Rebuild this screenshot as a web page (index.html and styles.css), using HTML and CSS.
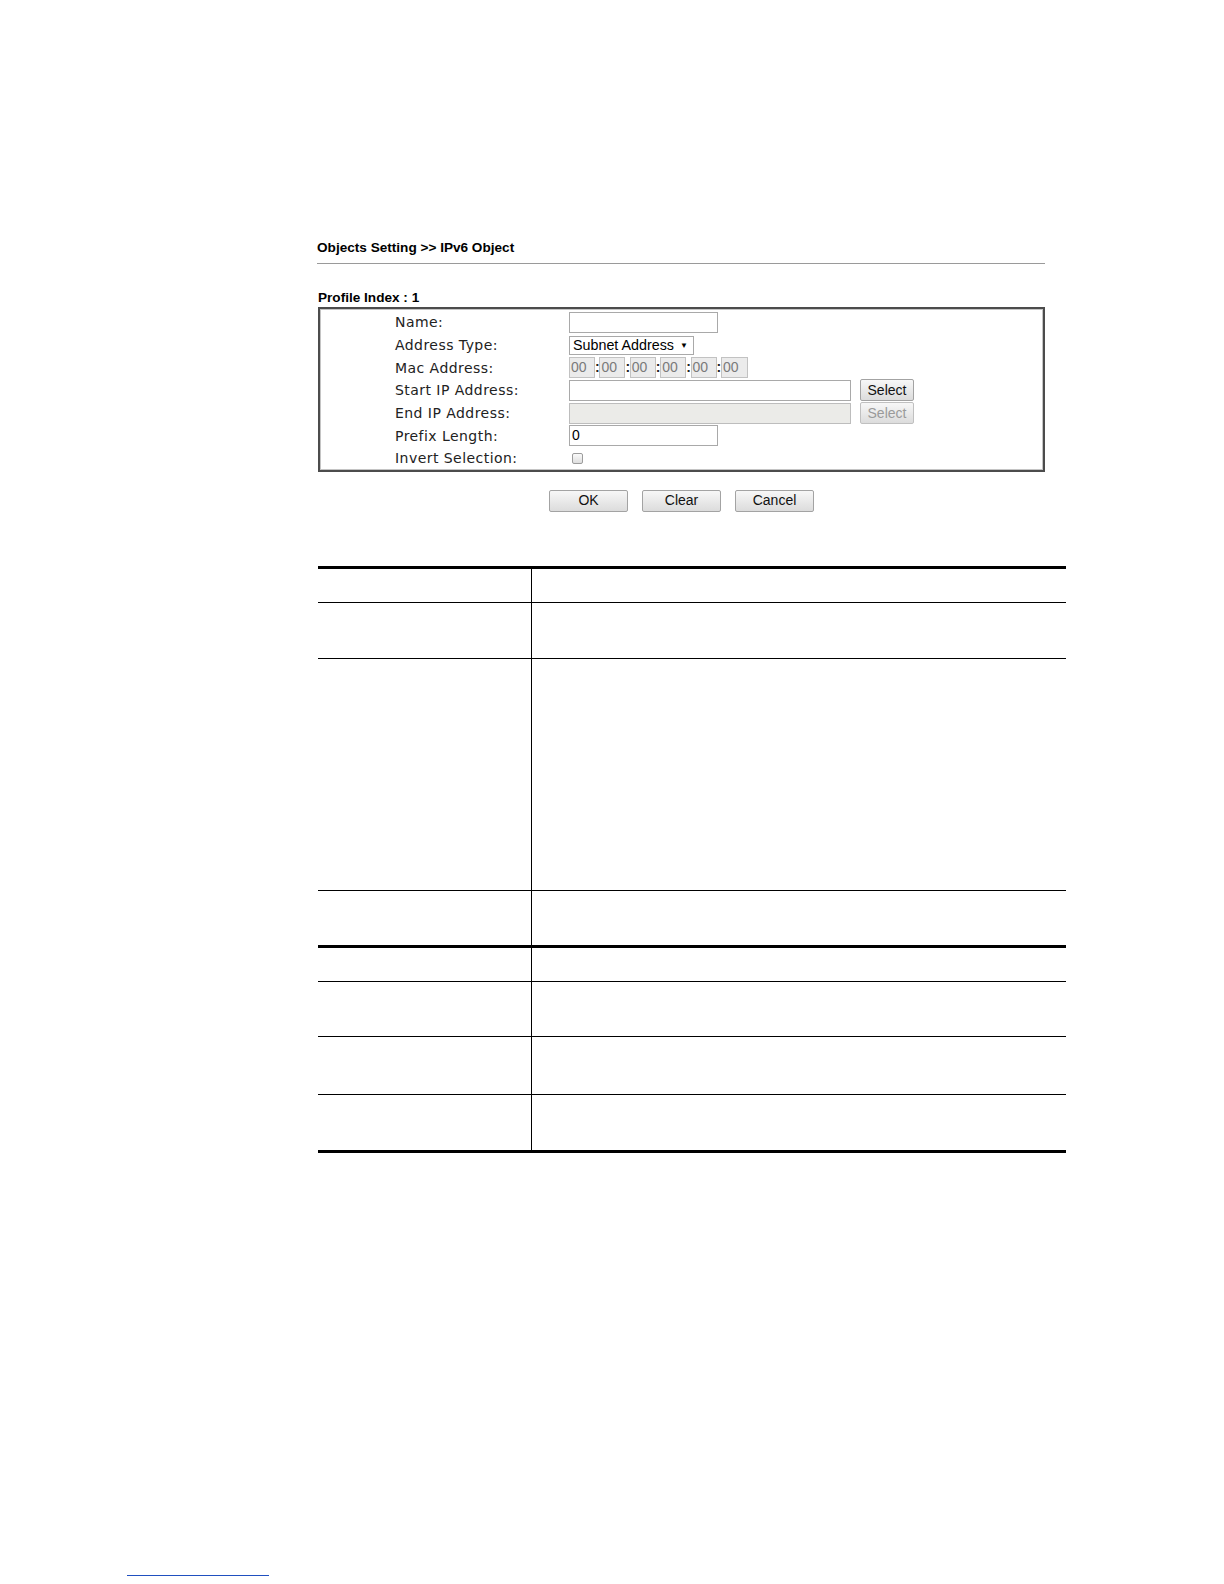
FILE: index.html
```html
<!DOCTYPE html>
<html lang="en">
<head>
<meta charset="utf-8">
<title>Objects Setting &gt;&gt; IPv6 Object</title>
<link rel="stylesheet" href="styles.css">
</head>
<body>
<div class="page">
  <div class="doc">
    <div class="title">Objects Setting &gt;&gt; IPv6 Object</div>
    <div class="profile">Profile Index : 1</div>
    <div class="box">
      <div class="row">
        <span class="label">Name:</span>
        <span class="input short"></span>
      </div>
      <div class="row">
        <span class="label">Address Type:</span>
        <span class="select">Subnet Address<span class="arrow">&#9660;</span></span>
      </div>
      <div class="row">
        <span class="label">Mac Address:</span>
        <span class="mac">
          <span class="mac-field">00</span><span class="colon">:</span><span class="mac-field">00</span><span class="colon">:</span><span class="mac-field">00</span><span class="colon">:</span><span class="mac-field">00</span><span class="colon">:</span><span class="mac-field">00</span><span class="colon">:</span><span class="mac-field">00</span>
        </span>
      </div>
      <div class="row">
        <span class="label">Start IP Address:</span>
        <span class="input long"></span>
        <span class="btn small">Select</span>
      </div>
      <div class="row">
        <span class="label">End IP Address:</span>
        <span class="input long disabled"></span>
        <span class="btn small disabled">Select</span>
      </div>
      <div class="row">
        <span class="label">Prefix Length:</span>
        <span class="input short">0</span>
      </div>
      <div class="row">
        <span class="label">Invert Selection:</span>
        <span class="checkbox"></span>
      </div>
    </div>
    <div class="actions">
      <span class="btn wide">OK</span>
      <span class="btn wide">Clear</span>
      <span class="btn wide">Cancel</span>
    </div>
  </div>

  <div class="tbl">
    <div class="tr h1"><div class="td"></div><div class="td"></div></div>
    <div class="tr h2"><div class="td"></div><div class="td"></div></div>
    <div class="tr h3"><div class="td"></div><div class="td"></div></div>
    <div class="tr h4"><div class="td"></div><div class="td"></div></div>
    <div class="tr h5 thick"><div class="td"></div><div class="td"></div></div>
    <div class="tr h6"><div class="td"></div><div class="td"></div></div>
    <div class="tr h7"><div class="td"></div><div class="td"></div></div>
    <div class="tr h8"><div class="td"></div><div class="td"></div></div>
  </div>

  <div class="footer-rule"></div>
</div>
</body>
</html>
```

FILE: styles.css
```css
html, body {
  margin: 0;
  padding: 0;
  background: #ffffff;
}

.page {
  padding-top: 240px;
}

.doc {
  margin-left: 317px;
  width: 728px;
}

.title {
  font: bold 13.6px/16px "Liberation Sans", Arial, sans-serif;
  color: #000;
  padding-bottom: 7px;
  border-bottom: 1px solid #9a9a9a;
}

.profile {
  margin-top: 26px;
  margin-left: 1px;
  font: bold 13.6px/16px "Liberation Sans", Arial, sans-serif;
  color: #000;
}

.box {
  margin-top: 1px;
  margin-left: 1px;
  width: 727px;
  box-sizing: border-box;
  border: 2px solid #4c4c4c;
  box-shadow: inset 0 0 0 1px #c4c4c4;
  padding: 2px 0 0 75px;
}

.row {
  display: flex;
  align-items: center;
  height: 22.7px;
}

.label {
  width: 174px;
  flex: none;
  font: 14px/16px "DejaVu Sans", Verdana, sans-serif;
  letter-spacing: 0.45px;
  color: #222;
}

.input {
  box-sizing: border-box;
  height: 21px;
  border: 1px solid #a9a9a9;
  background: #fff;
  font: 14px/19px "Liberation Sans", Arial, sans-serif;
  color: #000;
  padding-left: 2px;
}

.input.short {
  width: 149px;
}

.input.long {
  width: 282px;
}

.input.disabled {
  background: #ebebe8;
  border-color: #bdbdbd;
}

.select {
  box-sizing: border-box;
  height: 19px;
  width: 125px;
  border: 1px solid #a9a9a9;
  background: #fff;
  font: 14.3px/17px "Liberation Sans", Arial, sans-serif;
  color: #000;
  padding-left: 3px;
  display: flex;
  align-items: center;
}

.arrow {
  font-size: 8px;
  margin-left: 6px;
  line-height: 17px;
}

.mac {
  display: flex;
  align-items: center;
}

.mac-field {
  box-sizing: border-box;
  width: 26px;
  height: 21px;
  border: 1px solid #c2c2c2;
  background: #ebebeb;
  font: 14px/19px "Liberation Sans", Arial, sans-serif;
  color: #7a7a7a;
  padding-left: 1px;
}

.mac-field:last-child {
  width: 27px;
}

.colon {
  width: 4.4px;
  text-align: center;
  font: bold 14px/19px "Liberation Sans", Arial, sans-serif;
  color: #222;
}

.btn {
  box-sizing: border-box;
  height: 22px;
  display: inline-flex;
  align-items: center;
  justify-content: center;
  border: 1px solid #a3a3a3;
  border-radius: 2px;
  background: linear-gradient(#f7f7f7, #dcdcdc);
  font: 14px/19px "Liberation Sans", Arial, sans-serif;
  color: #111;
}

.btn.small {
  width: 54px;
  margin-left: 9px;
}

.btn.disabled {
  color: #9a9a9a;
  border-color: #c0c0c0;
}

.btn.wide {
  width: 79px;
}

.checkbox {
  box-sizing: border-box;
  width: 11px;
  height: 11px;
  margin-left: 3px;
  border: 1px solid #9c9c9c;
  border-radius: 2px;
  background: linear-gradient(#fafafa, #dedede);
}

.actions {
  margin-top: 18px;
  margin-left: 1px;
  width: 727px;
  display: flex;
  justify-content: center;
  gap: 14px;
}

.tbl {
  margin-top: 54px;
  margin-left: 318px;
  width: 748px;
  border-top: 3px solid #000;
  border-bottom: 3px solid #000;
}

.tr {
  display: grid;
  grid-template-columns: 214px 1fr;
}

.tr + .tr {
  border-top: 1px solid #000;
}

.tr.thick {
  border-top: 3px solid #000;
}

.td:first-child {
  border-right: 1px solid #000;
}

.h1 { height: 33px; }
.h2 { height: 55px; }
.h3 { height: 231px; }
.h4 { height: 54px; }
.h5 { height: 33px; }
.h6 { height: 54px; }
.h7 { height: 57px; }
.h8 { height: 55px; }

.footer-rule {
  margin-top: 422px;
  margin-left: 127px;
  width: 142px;
  border-top: 1px solid #2050c0;
}
```
